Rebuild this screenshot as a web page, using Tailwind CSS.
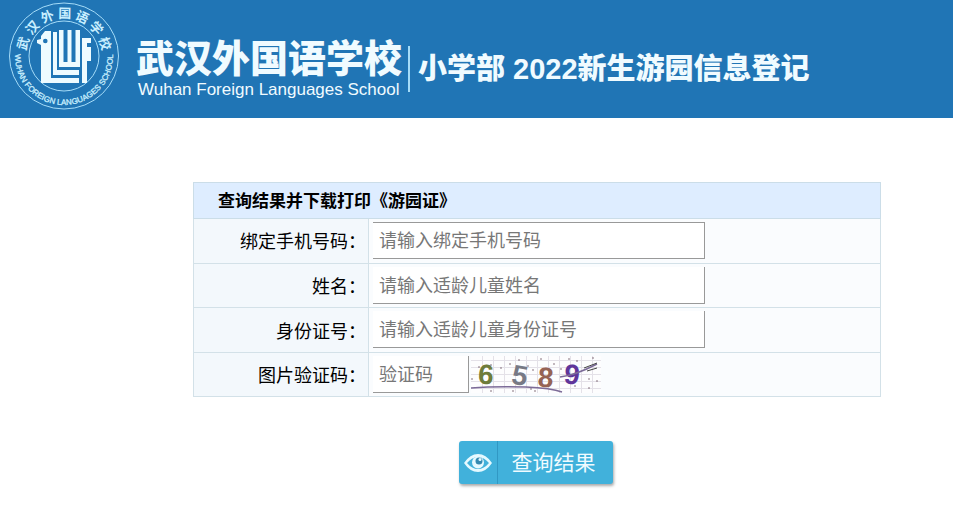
<!DOCTYPE html>
<html lang="zh-CN">
<head>
<meta charset="utf-8">
<meta name="viewport" content="width=device-width, initial-scale=1">
<title>武汉外国语学校小学部 2022新生游园信息登记</title>
<script src="https://cdn.jsdelivr.net/npm/@tailwindcss/browser@4"></script>
</head>
<body class="bg-white font-['Noto_Sans_CJK_SC','Noto_Sans',sans-serif] text-black">
<header class="flex items-start bg-[#2075b5] pb-2 pl-2 text-[#f0fbff]">
  <svg class="h-[110px] w-[112px] shrink-0" viewBox="0 0 112 110" role="img" aria-label="武汉外国语学校校徽">
    <defs><path id="ring" d="M7 56a49 49 0 0 0 98 0" /></defs>
    <g fill="none" stroke="#a5dcf8" stroke-width="1">
      <ellipse cx="56" cy="56" rx="54.500" ry="53" />
      <circle cx="56" cy="56" r="35" />
    </g>
    <g fill="#c9efff" font-family="'Noto Sans CJK SC',sans-serif" font-size="13" font-weight="700" text-anchor="middle">
      <text x="56" y="18" transform="rotate(-73 56 56)">武</text>
      <text x="56" y="18" transform="rotate(-48 56 56)">汉</text>
      <text x="56" y="18" transform="rotate(-23 56 56)">外</text>
      <text x="56" y="18" transform="rotate(1 56 56)">国</text>
      <text x="56" y="18" transform="rotate(25 56 56)">语</text>
      <text x="56" y="18" transform="rotate(49 56 56)">学</text>
      <text x="56" y="18" transform="rotate(73 56 56)">校</text>
    </g>
    <text fill="#c9efff" stroke="#c9efff" stroke-width="0.300" font-family="'Liberation Sans',Arial,sans-serif" font-size="8" text-anchor="middle"><textPath href="#ring" startOffset="50%">WUHAN FOREIGN LANGUAGES SCHOOL</textPath></text>
    <g fill="#eefbff">
      <path fill-rule="evenodd" d="M33 36l4-5h6v47h28v5H33V45l-4-2v-3l4-1zm2 5a2.300 2.300 0 1 0 4.600 0a2.300 2.300 0 1 0-4.600 0z" />
      <path d="M45 32h4v38h22v5H45z" />
      <path d="M51 30h4.500v32h4V30h4v32h4V30h4.500v37H51z" />
      <path d="M74 38h9v5h-4v4h4v14h-4v22h-5z" />
    </g>
  </svg>
  <div class="flex items-center pl-4 pt-8">
    <div>
      <p class="text-[38px] font-black leading-12">武汉外国语学校</p>
      <p class="pb-0.5 pl-0.5 font-['Liberation_Sans',Arial,sans-serif] text-[17px] leading-5">Wuhan Foreign Languages School</p>
    </div>
    <div class="ml-1.5 mt-1 flex h-[46px] items-center border-l-2 border-[#a5dcf8] pl-2">
      <h1 class="whitespace-nowrap font-['Liberation_Sans','Noto_Sans_CJK_SC',sans-serif] text-[29px] font-black leading-10">小学部 2022新生游园信息登记</h1>
    </div>
  </div>
</header>
<main class="pb-8 pl-[193px] pr-[72px] pt-16">
  <form>
    <table class="h-[215px] w-full border-collapse border border-[#d3e1e8] text-lg">
      <thead>
        <tr class="h-9 bg-[#deedff]"><th colspan="2" class="border border-[#cbdde8] pb-0.5 pl-6 text-left text-[17px] font-bold leading-6">查询结果并下载打印《游园证》</th></tr>
      </thead>
      <tbody>
        <tr>
          <th scope="row" class="w-[175px] border border-[#d3e1e8] bg-[#f3f8fc] pb-0.5 pr-0.5 text-right font-normal"><label for="phone">绑定手机号码：</label></th>
          <td class="border border-[#d3e1e8] bg-[#fafcfe] px-1 py-[3px]"><input id="phone" type="text" placeholder="请输入绑定手机号码" class="block h-[37px] w-[332px] border border-l-0 border-[#999] bg-white px-1.5 pb-1 placeholder:text-[#777]"></td>
        </tr>
        <tr>
          <th scope="row" class="border border-[#d3e1e8] bg-[#f3f8fc] pr-0.5 text-right font-normal"><label for="name">姓名：</label></th>
          <td class="border border-[#d3e1e8] bg-[#fafcfe] px-1 py-[3px]"><input id="name" type="text" placeholder="请输入适龄儿童姓名" class="block h-[37px] w-[332px] border-b border-r border-[#999] bg-white px-1.5 pb-0.5 placeholder:text-[#777]"></td>
        </tr>
        <tr>
          <th scope="row" class="border border-[#d3e1e8] bg-[#f3f8fc] pr-0.5 text-right font-normal"><label for="idno">身份证号：</label></th>
          <td class="border border-[#d3e1e8] bg-[#fafcfe] px-1 py-[3px]"><input id="idno" type="text" placeholder="请输入适龄儿童身份证号" class="block h-[37px] w-[332px] border-b border-r border-[#999] bg-white px-1.5 pb-0.5 placeholder:text-[#777]"></td>
        </tr>
        <tr>
          <th scope="row" class="border border-[#d3e1e8] bg-[#f3f8fc] pr-0.5 text-right font-normal"><label for="captcha">图片验证码：</label></th>
          <td class="border border-[#d3e1e8] bg-[#fafcfe] px-1 py-[3px]">
            <div class="flex items-center gap-0.5">
              <input id="captcha" type="text" placeholder="验证码" class="block h-[37px] w-24 border-b border-r border-[#999] bg-white px-1.5 pb-0.5 placeholder:text-[#777]">
              <svg class="h-[37px] w-[130px] overflow-visible" viewBox="0 0 130 37" role="img" aria-label="验证码图片">
                <rect width="130" height="37" fill="#fdfdfe" />
                <path fill="none" stroke="#e4e1e8" d="M11.500 0v37M22.500 0v37M33.500 0v37M44.500 0v37M55.500 0v37M66.500 0v37M77.500 0v37M88.500 0v37M99.500 0v37M110.500 0v37M121.500 0v37M0 4.500h130M0 11.500h130M0 18.500h130M0 25.500h130M0 32.500h130" />
                <g font-family="'Liberation Sans',Arial,sans-serif" font-size="28" font-weight="700">
                  <text x="7" y="28" fill="#6e7c3b" transform="rotate(4 15 20)">6</text>
                  <text x="41" y="29" fill="#777985" transform="rotate(10 49 20)">5</text>
                  <text x="67" y="31" fill="#966355" transform="rotate(4 75 20)">8</text>
                  <text x="93" y="28" fill="#60359a" transform="rotate(6 100 20)">9</text>
                </g>
                <path fill="none" stroke="#7c6b98" stroke-width="1.500" d="M0 32Q24 30 55 31Q80 32 91 36M89 21q16-2 37-13" />
                <path fill="none" stroke="#444" d="M113 12l13-5M116 15l10-3" />
                <path fill="none" stroke="#6a5060" stroke-width="1.500" stroke-linecap="round" d="M8 11h0M20 9h0M30 12h0M48 4h0M57 10h0M62 14h0M70 3h0M64 35h0M83 8h0M98 3h0M106 5h0M122 2h0M1 23h0M20 35h0M42 35h0M60 33h0M118 23h0M126 25h0M118 32h0M104 30h0M90 13h0M39 8h0" />
              </svg>
            </div>
          </td>
        </tr>
      </tbody>
    </table>
    <button type="submit" class="ml-[266px] mt-11 flex h-[43px] w-[154px] items-center rounded-[3px] bg-[#41b1db] text-[21px] text-[#f0fbff] shadow-[1px_2px_3px_#aaa]">
      <span class="flex h-full w-[39px] items-center justify-center border-r border-[#3198c4]">
        <svg class="h-5 w-7" viewBox="0 0 28 20" aria-hidden="true">
          <path fill="#e5f9ff" fill-rule="evenodd" d="M0 10Q6 1 14 1t14 9q-6 9-14 9T0 10zm3 0q5 6 11 6t11-6Q20 4 14 4T3 10z" />
          <circle cx="14" cy="9.500" r="6" fill="#e5f9ff" />
          <circle cx="15" cy="8" r="3.500" fill="#3489b1" />
          <circle cx="16" cy="6.500" r="1.500" fill="#e5f9ff" />
        </svg>
      </span>
      <span class="flex-1 pb-0.5 pr-1 text-center">查询结果</span>
    </button>
  </form>
</main>
</body>
</html>
